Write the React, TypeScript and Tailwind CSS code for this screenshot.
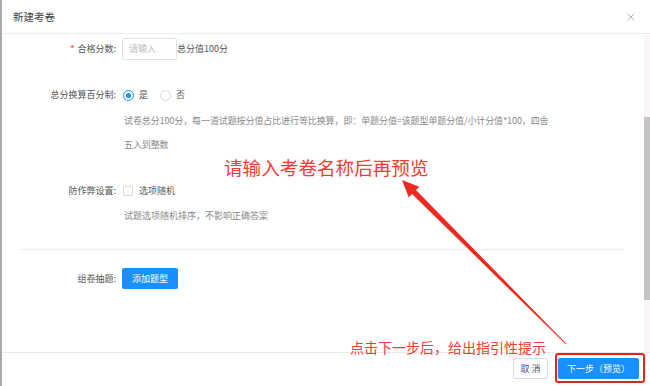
import { X } from 'lucide-react'

const font = { fontFamily: '"Noto Sans CJK SC", "Noto Sans", sans-serif' }

function arrowPoints(tail: [number, number], tip: [number, number]) {
  const dx = tip[0] - tail[0]
  const dy = tip[1] - tail[1]
  const len = Math.hypot(dx, dy)
  const ux = dx / len, uy = dy / len
  const nx = -uy, ny = ux
  const headLen = 17, headW = 7.5, shaftW = 2.8, tailW = 0.5
  const bx = tip[0] - ux * headLen, by = tip[1] - uy * headLen
  const pts: [number, number][] = [
    tip,
    [bx + nx * headW, by + ny * headW],
    [bx + nx * shaftW, by + ny * shaftW],
    [tail[0] + nx * tailW, tail[1] + ny * tailW],
    [tail[0] - nx * tailW, tail[1] - ny * tailW],
    [bx - nx * shaftW, by - ny * shaftW],
    [bx - nx * headW, by - ny * headW],
  ]
  return pts.map(p => p.join(',')).join(' ')
}

function Label({ children, required }: { children: React.ReactNode; required?: boolean }) {
  return (
    <div className="w-[116px] shrink-0 text-right text-[9px] text-[#555] pr-[2px]">
      {required && <span className="text-[#f5222d] mr-[3px]">*</span>}
      {children}:
    </div>
  )
}

export default function App() {
  return (
    <div className="relative w-[650px] h-[386px] bg-white overflow-hidden border-l-2 border-[#a8a8a8]" style={font}>
      {/* header */}
      <div className="h-[34px] flex items-center justify-between pl-[11px] pr-[13px] border-b border-[#ececec]">
        <span className="text-[10.5px] text-[#444]">新建考卷</span>
        <X size={12} strokeWidth={1.3} className="text-[#888]" />
      </div>

      {/* body */}
      <div className="h-[318px] flex flex-col">
        <div className="flex items-center mt-[4px] h-[22px]">
          <Label required>合格分数</Label>
          <div className="ml-[4px] w-[55px] h-[22px] border border-[#e2e2e2] rounded-[2px] flex items-center pl-[6px] text-[9px] text-[#bbb]">
            请输入
          </div>
          <span className="text-[9px] text-[#555]">总分值100分</span>
        </div>

        <div className="flex items-center mt-[27px] h-[16px]">
          <Label>总分换算百分制</Label>
          <div className="ml-[5px] flex items-center text-[9px] text-[#555]">
            <span className="w-[11px] h-[11px] rounded-full border border-[#1890ff] flex items-center justify-center">
              <span className="w-[5px] h-[5px] rounded-full bg-[#1890ff]" />
            </span>
            <span className="ml-[5px]">是</span>
            <span className="ml-[12px] w-[11px] h-[11px] rounded-full border border-[#dadada]" />
            <span className="ml-[5px]">否</span>
          </div>
        </div>

        <div className="mt-[6px] ml-[122px] text-[9px] leading-[24px] text-[#888] tracking-[-0.1px]">
          <div>试卷总分100分，每一道试题按分值占比进行等比换算，即：单题分值=该题型单题分值/小计分值*100，四舍</div>
          <div>五入到整数</div>
        </div>

        <div className="flex items-center mt-[26px] h-[16px]">
          <Label>防作弊设置</Label>
          <div className="ml-[5px] flex items-center text-[9px] text-[#555]">
            <span className="w-[10px] h-[10px] rounded-[1px] border border-[#dadada]" />
            <span className="ml-[6px]">选项随机</span>
          </div>
        </div>

        <div className="mt-[5px] ml-[122px] text-[9px] leading-[24px] text-[#888]">
          试题选项随机排序，不影响正确答案
        </div>

        <div className="mt-[21px] ml-[18px] mr-[26px] border-t border-[#ececec]" />

        <div className="flex items-center mt-[18px] h-[21px]">
          <Label>组卷抽题</Label>
          <button className="ml-[4px] w-[56px] h-[21px] rounded-[2px] bg-[#1890ff] text-white text-[9px]">添加题型</button>
        </div>
      </div>

      {/* footer */}
      <div className="h-[34px] border-t border-[#e8e8e8] flex items-start justify-end pt-[5px] pr-[11px] gap-[10px]">
        <button className="w-[35px] h-[21px] border border-[#dcdcdc] rounded-[2px] text-[9px] text-[#555]">取 消</button>
        <button className="w-[81px] h-[21px] rounded-[2px] bg-[#1890ff] text-white text-[9px]">下一步（预览）</button>
      </div>

      {/* scrollbar */}
      <div className="absolute right-0 top-[35px] w-[6px] h-[317px] bg-[#fbf6f6]">
        <div className="mt-[82px] h-[183px] bg-[#c4c4c4]" />
      </div>

      {/* annotations */}
      <div className="absolute left-[222px] top-[154px] text-[18.6px] leading-[26px] text-[#f63a33]">请输入考卷名称后再预览</div>
      <div className="absolute left-[348px] top-[337px] text-[14px] leading-[20px] text-[#f63a33]">点击下一步后，给出指引性提示</div>
      <svg className="absolute left-0 top-0 pointer-events-none" width="650" height="386">
        <polygon points={arrowPoints([564, 344], [400, 180])} fill="#ec2a22" />
      </svg>
      <div className="absolute left-[553px] top-[353px] w-[90px] h-[30px] border-2 border-[#e8231d] rounded-[3px]" />
    </div>
  )
}
